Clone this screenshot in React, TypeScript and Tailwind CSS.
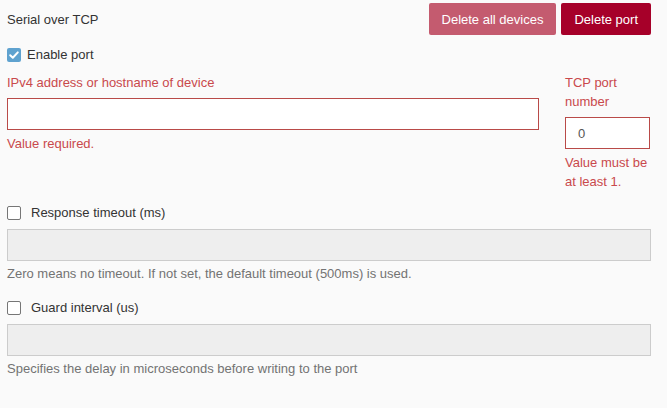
import React from 'react';

const Box = ({ checked }: { checked?: boolean }) =>
  checked ? (
    <span className="flex h-[14px] w-[14px] items-center justify-center rounded-[2px] bg-[#5fa2cf]">
      <svg viewBox="0 0 14 14" className="h-[14px] w-[14px]">
        <path d="M3.2 7.2l2.6 2.6 5-5.4" fill="none" stroke="#fff" strokeWidth="2" strokeLinecap="round" strokeLinejoin="round" />
      </svg>
    </span>
  ) : (
    <span className="block h-[14px] w-[14px] rounded-[2px] border border-[#767676] bg-white" />
  );

function App() {
  return (
    <div
      className="min-h-[408px] bg-[#fafafa] pl-[7px] pr-[16px] pt-[3px] text-[13px] leading-[19px] text-[#333]"
      style={{ fontFamily: '"Liberation Sans", Arial, sans-serif' }}
    >
      <div className="flex h-[32px] items-center justify-between">
        <span>Serial over TCP</span>
        <div className="flex gap-[5px]">
          <button className="h-[32px] rounded-[2px] bg-[#c45b6f] px-[13px] text-white">Delete all devices</button>
          <button className="h-[32px] rounded-[2px] bg-[#a60029] px-[13px] text-white">Delete port</button>
        </div>
      </div>

      <label className="mt-[10px] flex h-[19px] items-center gap-[6px]">
        <Box checked />
        <span>Enable port</span>
      </label>

      <div className="mt-[9px] grid grid-cols-[532px_85px] gap-x-[26px] text-[#c9494c]">
        <div>
          <div>IPv4 address or hostname of device</div>
          <div className="mt-[6px] h-[32px] border border-[#b94a48] bg-white" />
          <div className="mt-[4px]">Value required.</div>
        </div>
        <div>
          <div>TCP port number</div>
          <div className="mt-[6px] flex h-[32px] items-center border border-[#b94a48] bg-white pl-[12px] text-[#555]">0</div>
          <div className="mt-[4px]">Value must be at least 1.</div>
        </div>
      </div>

      <label className="mt-[12px] flex h-[19px] items-center gap-[10px]">
        <Box />
        <span>Response timeout (ms)</span>
      </label>
      <div className="mt-[7px] h-[32px] border border-[#ccc] bg-[#eee]" />
      <div className="mt-[3px] text-[#737373]">Zero means no timeout. If not set, the default timeout (500ms) is used.</div>

      <label className="mt-[15px] flex h-[19px] items-center gap-[10px]">
        <Box />
        <span>Guard interval (us)</span>
      </label>
      <div className="mt-[7px] h-[32px] border border-[#ccc] bg-[#eee]" />
      <div className="mt-[3px] text-[#737373]">Specifies the delay in microseconds before writing to the port</div>
    </div>
  );
}

export default App;
